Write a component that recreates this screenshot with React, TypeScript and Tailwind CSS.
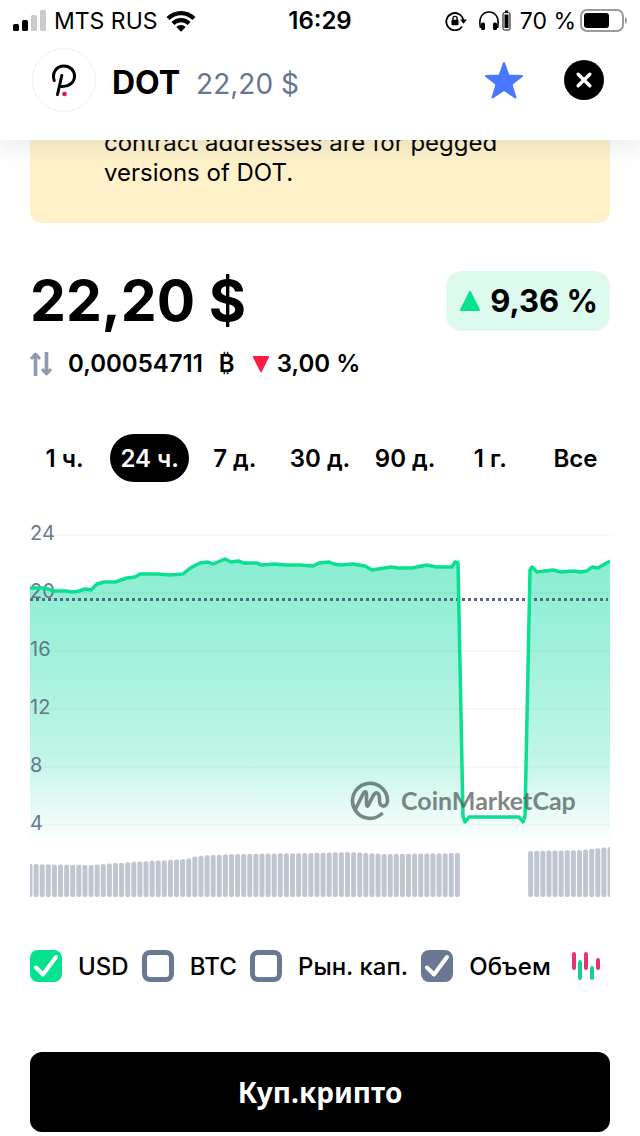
import React, { useState } from 'react';

const ranges = ['1 ч.', '24 ч.', '7 д.', '30 д.', '90 д.', '1 г.', 'Все'];

const gridLines = [
  { value: 24, y: 25 },
  { value: 20, y: 83 },
  { value: 16, y: 141 },
  { value: 12, y: 199 },
  { value: 8, y: 257 },
  { value: 4, y: 315 },
];

const pricePoints = [
  [0, 78], [12, 78], [18, 79], [24, 81], [36, 81], [43, 82], [49, 81], [55, 79], [61, 80], [67, 74],
  [74, 72], [85, 72], [97, 68], [105, 67], [110, 64], [122, 64], [128, 64], [140, 65], [153, 64],
  [159, 59], [164, 56], [170, 53], [178, 52], [183, 54], [195, 49], [201, 52], [208, 51], [214, 53],
  [226, 53], [232, 55], [244, 54], [256, 55], [270, 55], [283, 56], [289, 53], [299, 52], [304, 54],
  [310, 55], [323, 54], [335, 56], [342, 60], [354, 58], [361, 57], [368, 58], [382, 58], [397, 55],
  [406, 57], [422, 57], [425, 52], [428, 53], [433, 306], [435, 312], [439, 307], [489, 307],
  [493, 312], [495, 306], [500, 60], [502, 57], [507, 62], [515, 61], [523, 60], [531, 62], [543, 61],
  [550, 62], [557, 61], [562, 57], [568, 58], [580, 51],
];

// top edge of the volume columns, interpolated between these stops
const volumeStops = [
  [0, 354], [60, 355], [100, 352], [157, 349], [166, 346], [200, 344], [280, 343],
  [320, 342], [355, 344], [430, 343], [500, 341], [550, 340], [580, 337],
];

const linePath = 'M' + pricePoints.map((p) => p.join(' ')).join(' L');
const areaPath = `${linePath} L580 335 L0 335 Z`;

const volumeTop = (x: number) => {
  const i = Math.max(1, volumeStops.findIndex((s) => s[0] >= x));
  const [x0, y0] = volumeStops[i - 1];
  const [x1, y1] = volumeStops[i];
  return y0 + ((y1 - y0) * (x - x0)) / (x1 - x0);
};

const volumeBars = Array.from({ length: 96 }, (_, i) => (i * 580) / 95).filter((x) => x < 430 || x > 499);

const StatusBar = () => (
  <div className="grid grid-cols-3 items-center h-10 px-3 pt-[2px] text-[23px] leading-7 whitespace-nowrap">
    <div className="flex items-center gap-2">
      <svg width="34" height="22" viewBox="0 0 34 22">
        <rect x="1" y="14" width="6" height="7" rx="1.5" />
        <rect x="10" y="10" width="6" height="11" rx="1.5" />
        <rect x="19" y="5" width="6" height="16" rx="1.5" fill="#cbcbcb" />
        <rect x="28" y="0" width="6" height="21" rx="1.5" fill="#cbcbcb" />
      </svg>
      <span>MTS RUS</span>
      <svg width="30" height="22" viewBox="0 0 30 22">
        <path d="M0.5 7 A20.5 20.5 0 0 1 29.5 7 L26.5 10 A16.3 16.3 0 0 0 3.5 10 Z" />
        <path d="M5.5 12 A13.5 13.5 0 0 1 24.5 12 L21.6 15 A9.3 9.3 0 0 0 8.4 15 Z" />
        <path d="M10.3 17 A6.7 6.7 0 0 1 19.7 17 L15 21.7 Z" />
      </svg>
    </div>
    <span className="text-center font-semibold text-2xl">16:29</span>
    <div className="flex items-center justify-end">
      <svg width="22" height="20" viewBox="0 0 22 20" fill="none" stroke="black" strokeWidth="1.8" className="mr-3">
        <path d="M17 15.5 A8.6 8.6 0 1 1 18.4 9.500" />
        <path d="M15.2 8.500 H21.8 L18.5 12.8 Z" fill="black" stroke="none" />
        <rect x="6.5" y="8.7" width="7" height="5.6" rx="1" fill="black" stroke="none" />
        <path d="M7.9 9 V7.5 A2.1 2.1 0 0 1 12.1 7.5 V9" strokeWidth="1.4" />
      </svg>
      <svg width="33" height="22" viewBox="0 0 33 22" fill="none" stroke="black" className="mr-2">
        <path d="M1.5 18 C-1 7 4 2 10 2 C16 2 21 7 18.5 18" strokeWidth="1.6" />
        <rect x="2" y="12.5" width="4" height="7.5" rx="1.5" fill="black" stroke="none" />
        <rect x="14" y="12.5" width="4" height="7.5" rx="1.5" fill="black" stroke="none" />
        <rect x="24" y="2.6" width="7" height="17.4" rx="1.5" strokeWidth="1" />
        <rect x="25.5" y="4.500" width="4" height="13.5" fill="black" stroke="none" />
        <path d="M26 1.2 H29" strokeWidth="1.4" />
      </svg>
      <span className="mr-1">70 %</span>
      <svg width="48" height="24" viewBox="0 0 48 24">
        <rect x="1" y="1" width="42" height="21" rx="6" fill="none" stroke="#9b9b9b" strokeWidth="2" />
        <rect x="4" y="4" width="25" height="15" rx="3" />
        <path d="M45 8 A4 4 0 0 1 45 15 Z" fill="#9b9b9b" />
      </svg>
    </div>
  </div>
);

const Header = () => (
  <header className="relative z-10 pb-5 bg-white shadow-[0_4px_24px_rgba(88,102,126,0.16)]">
    <StatusBar />
    <div className="flex items-center h-20 px-8">
      <div className="flex items-center justify-center w-16 h-16 rounded-full border border-[#f2f2f2]">
        <svg width="26" height="34" viewBox="0 0 26 34" fill="none" stroke="black" strokeWidth="3" strokeLinecap="round">
          <path d="M3.2 17.5 C0.5 9 6 3 13 3 C19 3 23.5 7.5 23.5 13 C23.5 20 17.5 24 10 23.5" />
          <path d="M10.8 12.5 L6.5 31.5" />
          <circle cx="13.5" cy="31" r="2.3" fill="#d4146f" stroke="none" />
        </svg>
      </div>
      <div className="flex items-baseline gap-4 ml-4 pt-[6px] leading-10">
        <h1 className="font-bold text-[32px]">DOT</h1>
        <span className="text-[28px] text-[#667590]">22,20 $</span>
      </div>
      <button type="button" aria-label="В избранное" className="ml-auto">
        <svg width="40" height="38" viewBox="0 0 40 38" fill="#4878ff" stroke="#4878ff" strokeWidth="2" strokeLinejoin="round">
          <path d="M20 2 L24.5 14.5 L38 15 L27.5 23.3 L31.5 36.5 L20 29 L8.5 36.5 L12.5 23.3 L2 15 L15.5 14.5 Z" />
        </svg>
      </button>
      <button type="button" aria-label="Закрыть" className="ml-10 mr-1 flex items-center justify-center w-10 h-10 rounded-full bg-black">
        <svg width="16" height="16" viewBox="0 0 16 16" stroke="white" strokeWidth="3.4" strokeLinecap="round">
          <path d="M2.2 2.2 L13.8 13.8 M13.8 2.2 L2.2 13.8" />
        </svg>
      </button>
    </div>
  </header>
);

const PriceChart = () => (
  <svg viewBox="0 0 580 390" className="block w-full" role="img" aria-label="DOT, USD">
    <defs>
      <linearGradient id="area" gradientUnits="userSpaceOnUse" x1="0" y1="50" x2="0" y2="335">
        <stop offset="0" stopColor="#8aedd2" />
        <stop offset="0.2" stopColor="#97f0d8" />
        <stop offset="0.68" stopColor="#bff5e7" />
        <stop offset="1" stopColor="#ffffff" />
      </linearGradient>
      <clipPath id="plot">
        <rect width="580" height="390" />
      </clipPath>
    </defs>
    <path d={areaPath} fill="url(#area)" />
    {gridLines.map((line) => (
      <g key={line.value}>
        <path d={`M0 ${line.y} H580`} stroke="#58667e" strokeOpacity="0.06" strokeWidth="1.5" />
        <text x="0" y={line.y + 5} fill="#58667e" fillOpacity="0.9" fontSize="20">{line.value}</text>
      </g>
    ))}
    <path d="M0 89.500 H578" stroke="#58667e" strokeWidth="3" strokeDasharray="3 3" />
    <g clipPath="url(#plot)">
      <path d={linePath} fill="none" stroke="#0cdf8f" strokeWidth="3.5" strokeLinejoin="round" />
      {volumeBars.map((x) => (
        <rect key={x} x={x - 2.5} y={volumeTop(x)} width="5" height={387 - volumeTop(x)} rx="2" fill="#c0c5d2" />
      ))}
    </g>
    {/* watermark */}
    <g opacity="0.72">
      <path
        d="M351.500 304 A17.500 17.500 0 1 1 357.500 290 C357.500 298 349.500 298 349.500 291 C350 282 346 281 343 286 L338.500 295 C337.500 297 336.500 296 336.500 294 V285 C336.500 281 334.500 281 333 284 L325.500 299"
        fill="none"
        stroke="#4f5a58"
        strokeWidth="3.6"
        strokeLinecap="round"
        strokeLinejoin="round"
      />
      <text x="371" y="300" fontSize="25" fill="#4f5a58" className="font-[Lato] font-bold">CoinMarketCap</text>
    </g>
  </svg>
);

interface ToggleProps {
  label: string;
  color: string;
  checked: boolean;
  onChange: () => void;
}

const Toggle: React.FC<ToggleProps> = ({ label, color, checked, onChange }) => (
  <label className="flex items-center gap-4">
    <span className="relative w-8 h-8">
      <input
        type="checkbox"
        checked={checked}
        onChange={onChange}
        className={`block appearance-none w-8 h-8 rounded-lg border-[5px] border-[#6b7893] ${color}`}
      />
      {checked && (
        <svg className="absolute inset-0 pointer-events-none" width="32" height="32" viewBox="0 0 32 32" fill="none" stroke="white" strokeWidth="4" strokeLinecap="round" strokeLinejoin="round">
          <path d="M6 17.5 L13 24.500 L26 7" />
        </svg>
      )}
    </span>
    <span className="pt-[2px] leading-7">{label}</span>
  </label>
);

const App: React.FC = () => {
  const [range, setRange] = useState('24 ч.');
  const [shown, setShown] = useState({ usd: true, btc: false, cap: false, volume: true });

  const toggle = (key: keyof typeof shown) => setShown({ ...shown, [key]: !shown[key] });

  return (
    <div className="min-h-screen bg-white text-black font-[Inter,sans-serif]">
      <Header />

      <main className="px-[30px] pb-1">
        {/* Contract notice, scrolled under the header */}
        <div className="-mt-3 pl-[74px] pr-16 pb-[35px] rounded-b-xl bg-[#fff2ca]">
          <p className="text-2xl leading-[30px]">contract addresses are for pegged versions of DOT.</p>
        </div>

        {/* Price */}
        <section className="mt-12">
          <div className="flex items-center justify-between">
            <h2 className="font-bold text-[57px] leading-[60px]">22,20 $</h2>
            <div className="flex items-center gap-2 h-[60px] px-3 rounded-2xl bg-[#ddfaee]">
              <svg width="24" height="22" viewBox="0 0 24 22" fill="#06e28e" stroke="#06e28e" strokeWidth="2" strokeLinejoin="round">
                <path d="M12 2 L21 20 H3 Z" />
              </svg>
              <span className="font-bold text-[31px]">9,36 %</span>
            </div>
          </div>
          <div className="flex items-center mt-[17px] text-2xl font-semibold">
            <svg width="22" height="24" viewBox="0 0 22 24" fill="none" stroke="#8f99b0" strokeWidth="3.6">
              <path d="M5.500 24 V3 M16.500 0 V21" />
              <path d="M1 7 L5.500 2 L10 7 M12 17 L16.500 22 L21 17" strokeWidth="3" strokeLinejoin="round" />
            </svg>
            <span className="ml-4">0,00054711</span>
            <span className="ml-4">₿</span>
            <svg width="16" height="16" viewBox="0 0 16 16" fill="#ff1c40" stroke="#ff1c40" strokeWidth="2" strokeLinejoin="round" className="ml-[18px] mr-2">
              <path d="M1 1 H15 L8 15 Z" />
            </svg>
            <span>3,00 %</span>
          </div>
        </section>

        <div className="grid grid-cols-7 -mx-2 mt-[54px]">
          {ranges.map((item) => (
            <button
              key={item}
              type="button"
              onClick={() => setRange(item)}
              className={`justify-self-center h-12 px-[10px] pt-[2px] rounded-3xl text-2xl font-semibold whitespace-nowrap ${
                item === range ? 'bg-black text-white' : ''
              }`}
            >
              {item}
            </button>
          ))}
        </div>

        <div className="mt-7">
          <PriceChart />
        </div>

        {/* Series */}
        <div className="flex items-center justify-between mt-[50px] pr-[10px] text-2xl font-medium whitespace-nowrap">
          <Toggle label="USD" color="checked:bg-[#06e28e] checked:border-[#06e28e]" checked={shown.usd} onChange={() => toggle('usd')} />
          <Toggle label="BTC" color="checked:bg-[#6b7893]" checked={shown.btc} onChange={() => toggle('btc')} />
          <Toggle label="Рын. кап." color="checked:bg-[#6b7893]" checked={shown.cap} onChange={() => toggle('cap')} />
          <Toggle label="Объем" color="checked:bg-[#6b7893]" checked={shown.volume} onChange={() => toggle('volume')} />
          <button type="button" aria-label="Свечи" className="ml-2">
            <svg width="28" height="28" viewBox="0 0 28 28" strokeWidth="4" strokeLinecap="round" className="block">
              <path d="M2 2 V16 M14 2 V16 M26 8 V16" stroke="#e83468" />
              <path d="M8 10 V26 M20 16 V26" stroke="#14cf96" />
            </svg>
          </button>
        </div>

        <button type="button" className="block w-full h-20 mt-[70px] rounded-xl bg-black text-white text-[28px] font-bold font-[family-name:Noto_Sans]">
          Куп.крипто
        </button>
      </main>
    </div>
  );
};

export default App;
